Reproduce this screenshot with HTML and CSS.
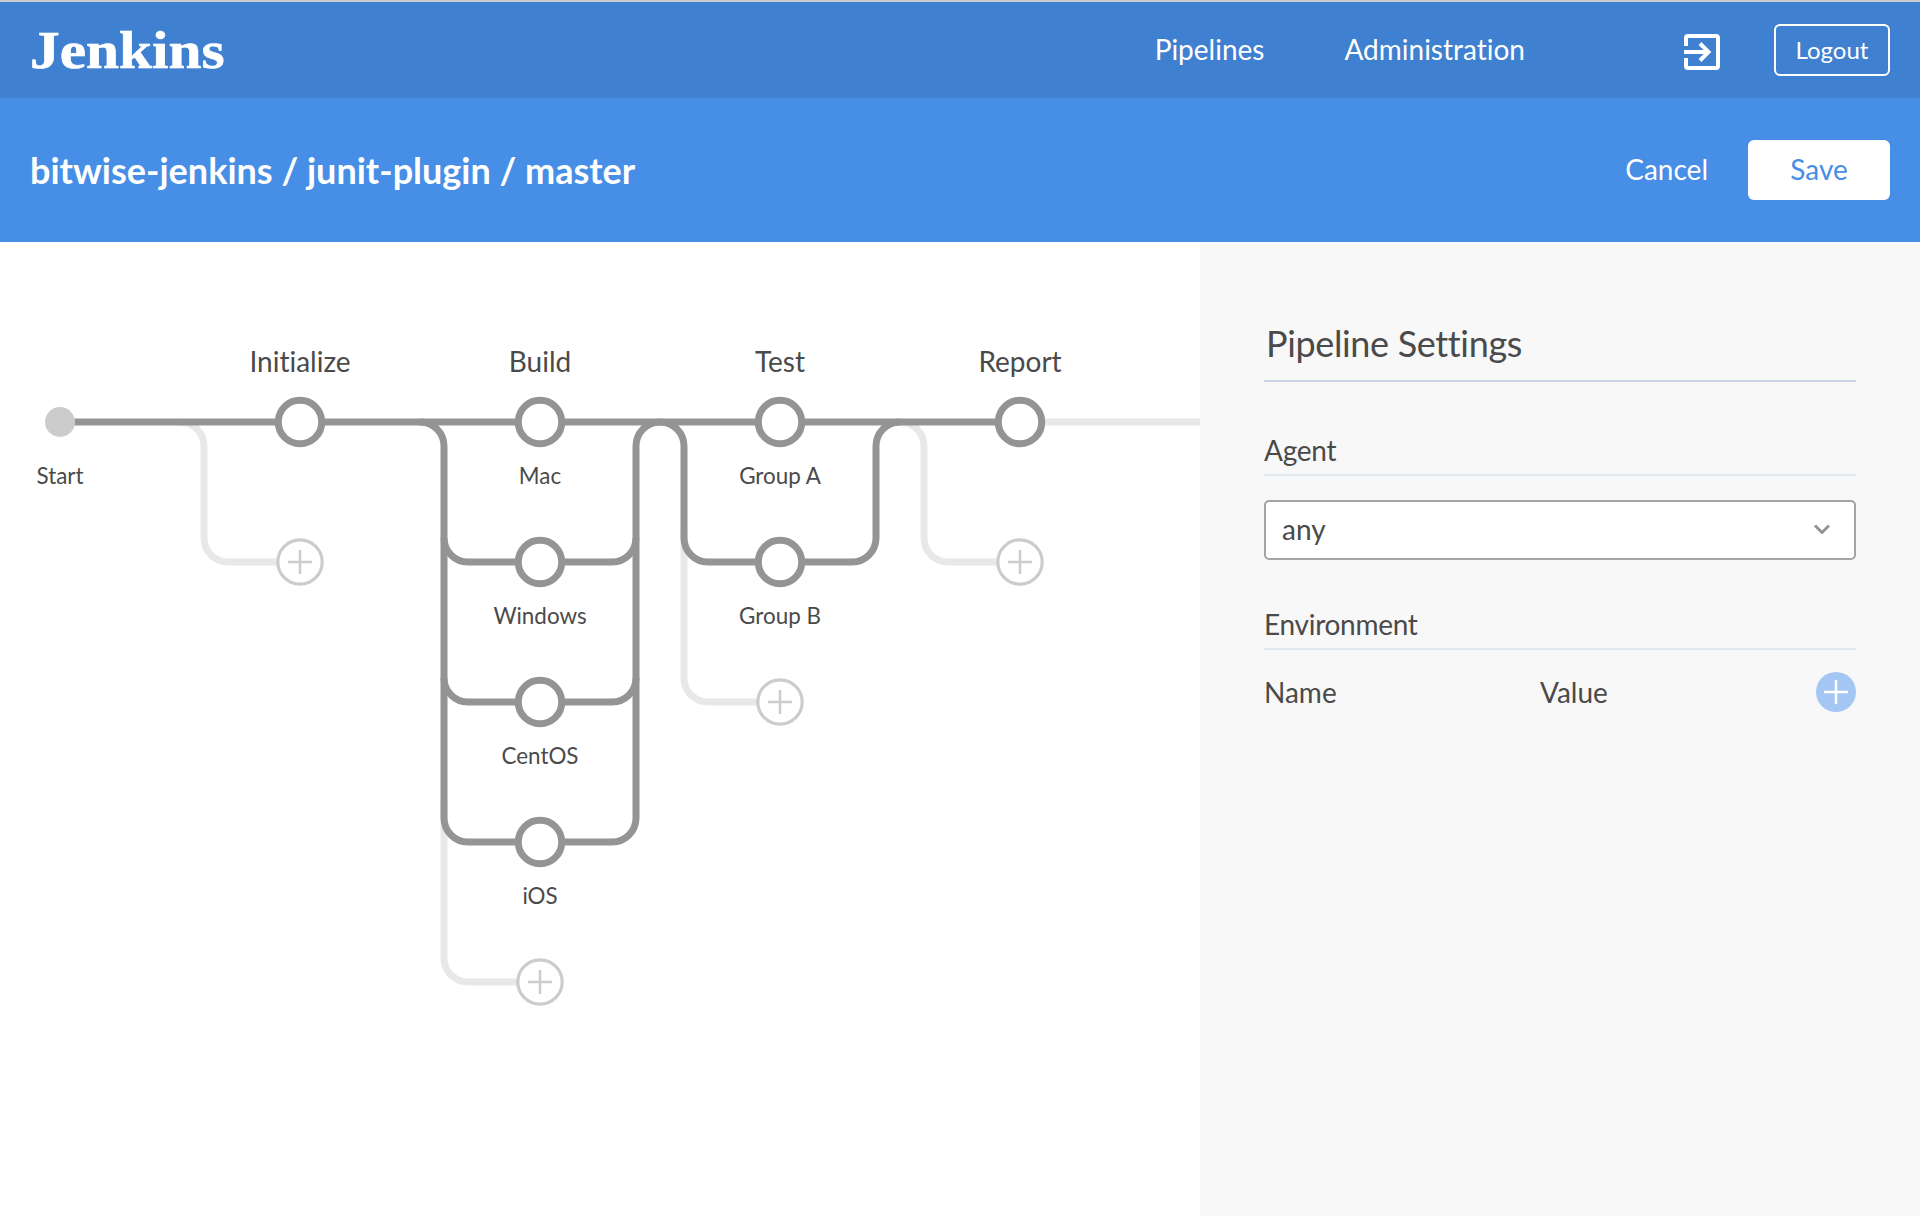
FILE: index.html
```html
<!DOCTYPE html>
<html lang="en">
<head>
<meta charset="utf-8">
<title>Jenkins Pipeline Editor</title>
<link rel="stylesheet" href="styles.css">
</head>
<body>
<header class="topbar">
  <div class="logo">Jenkins</div>
  <nav class="nav">
    <a class="nav-link">Pipelines</a>
    <a class="nav-link nav-admin">Administration</a>
    <svg class="exit-icon" viewBox="0 0 36 36"><path d="M2 12V4a2 2 0 0 1 2-2h28a2 2 0 0 1 2 2v28a2 2 0 0 1-2 2H4a2 2 0 0 1-2-2v-8" /><path d="M0 18h25M16 9.500l8.500 8.500l-8.500 8.500" /></svg>
    <button class="logout">Logout</button>
  </nav>
</header>
<section class="titlebar">
  <h1 class="title">bitwise-jenkins / junit-plugin / master</h1>
  <div class="actions">
    <a class="cancel">Cancel</a>
    <button class="save">Save</button>
  </div>
</section>
<main class="main">
  <section class="graph-pane">
    <svg class="graph" viewBox="0 242 1200 974">
      <g class="line-light">
        <path d="M180 422A24 24 0 0 1 204 446V538A24 24 0 0 0 228 562H300"/>
        <path d="M444 800V958A24 24 0 0 0 468 982H540"/>
        <path d="M684 530V678A24 24 0 0 0 708 702H780"/>
        <path d="M900 422A24 24 0 0 1 924 446V538A24 24 0 0 0 948 562H1020"/>
        <path d="M1020 422H1200"/>
      </g>
      <g class="line">
        <path d="M60 422H1020"/>
        <path d="M420 422A24 24 0 0 1 444 446V818A24 24 0 0 0 468 842H612A24 24 0 0 0 636 818V446A24 24 0 0 1 660 422"/>
        <path d="M444 538A24 24 0 0 0 468 562H612A24 24 0 0 0 636 538"/>
        <path d="M444 678A24 24 0 0 0 468 702H612A24 24 0 0 0 636 678"/>
        <path d="M660 422A24 24 0 0 1 684 446V538A24 24 0 0 0 708 562H852A24 24 0 0 0 876 538V446A24 24 0 0 1 900 422"/>
      </g>
      <circle class="start" cx="60" cy="422" r="15"/>
      <g class="node">
        <circle cx="300" cy="422" r="21.750"/>
        <circle cx="540" cy="422" r="21.750"/>
        <circle cx="540" cy="562" r="21.750"/>
        <circle cx="540" cy="702" r="21.750"/>
        <circle cx="540" cy="842" r="21.750"/>
        <circle cx="780" cy="422" r="21.750"/>
        <circle cx="780" cy="562" r="21.750"/>
        <circle cx="1020" cy="422" r="21.750"/>
      </g>
      <g class="add">
        <circle cx="300" cy="562" r="22.200"/><path d="M288 562h24M300 550v24"/>
        <circle cx="540" cy="982" r="22.200"/><path d="M528 982h24M540 970v24"/>
        <circle cx="780" cy="702" r="22.200"/><path d="M768 702h24M780 690v24"/>
        <circle cx="1020" cy="562" r="22.200"/><path d="M1008 562h24M1020 550v24"/>
      </g>
      <g class="stage">
        <text x="300" y="372">Initialize</text>
        <text x="540" y="372">Build</text>
        <text x="780" y="372">Test</text>
        <text x="1020" y="372">Report</text>
      </g>
      <g class="step">
        <text x="60" y="484">Start</text>
        <text x="540" y="484">Mac</text>
        <text x="540" y="624">Windows</text>
        <text x="540" y="764">CentOS</text>
        <text x="540" y="904">iOS</text>
        <text x="780" y="484">Group A</text>
        <text x="780" y="624">Group B</text>
      </g>
    </svg>
  </section>
  <aside class="settings">
    <h2 class="settings-title">Pipeline Settings</h2>
    <h3 class="group-title">Agent</h3>
    <div class="select">
      <span>any</span>
      <svg class="chevron" viewBox="0 0 16 10"><path d="M1 1.500l7 7l7-7"/></svg>
    </div>
    <h3 class="group-title env-title">Environment</h3>
    <div class="env-head">
      <span class="env-name">Name</span>
      <span class="env-value">Value</span>
      <svg class="env-add" viewBox="0 0 40 40"><circle cx="20" cy="20" r="20"/><path d="M8 20h24M20 8v24"/></svg>
    </div>
  </aside>
</main>
</body>
</html>
```
FILE: styles.css
```css
* { box-sizing: border-box; }
body {
  margin: 0;
  height: 1216px;
  display: flex;
  flex-direction: column;
  overflow: hidden;
  font-family: Lato, sans-serif;
  font-size: 28px;
  font-variant-ligatures: none;
  color: #4a4a4a;
  background: #fff;
}
h1, h2, h3 { margin: 0; font-weight: 400; }
button { font-family: inherit; padding: 0; }

.topbar {
  height: 98px;
  flex: none;
  border-top: 2px solid #ccc;
  background: #4080d0;
  color: #fff;
  display: flex;
  justify-content: space-between;
  padding: 0 30px;
}
.logo {
  font-family: "Liberation Serif", serif;
  font-weight: 700;
  font-size: 53px;
  line-height: 96px;
  transform: scaleX(1.12);
  transform-origin: left;
  -webkit-text-stroke: 0.6px #fff;
}
.nav { display: flex; align-items: center; }
.nav-link { line-height: 94px; padding-bottom: 2px; }
.nav-admin { margin-left: 80px; }
.exit-icon {
  width: 36px;
  height: 36px;
  margin: 4px 54px 0 159px;
  fill: none;
  stroke: #fff;
  stroke-width: 4;
}
.logout {
  width: 116px;
  height: 52px;
  padding-bottom: 2px;
  border: 2px solid #fff;
  border-radius: 6px;
  background: transparent;
  color: #fff;
  font-size: 24px;
}

.titlebar {
  height: 144px;
  flex: none;
  background: #478ee6;
  color: #fff;
  display: flex;
  align-items: center;
  justify-content: space-between;
  padding: 0 30px;
}
.title { font-size: 36px; font-weight: 700; }
.actions { display: flex; align-items: center; gap: 40px; }
.cancel { padding-bottom: 2px; }
.save {
  width: 142px;
  height: 60px;
  padding-bottom: 2px;
  border: 0;
  border-radius: 6px;
  background: #fff;
  color: #478ee6;
  font-size: 28px;
}

.main { flex: 1; display: flex; }
.graph-pane { width: 1200px; }
.graph { display: block; width: 1200px; height: 974px; }
.line, .line-light { fill: none; stroke: #949494; stroke-width: 7; }
.line-light { stroke: #e8e8e8; }
.start { fill: #ccc; }
.node { fill: #fff; stroke: #949494; stroke-width: 7; }
.add { fill: #fff; stroke: #ccc; stroke-width: 3.2; }
.add path { stroke-width: 2.5; }
.stage, .step { fill: #4a4a4a; text-anchor: middle; }
.stage { font-size: 28px; }
.step { font-size: 22.4px; }

.settings {
  flex: 1;
  background: #f8f8f8;
  padding: 78px 64px 0;
}
.settings-title {
  height: 62px;
  padding-left: 2px;
  border-bottom: 2px solid #ccd6e4;
  font-size: 36px;
  letter-spacing: -0.35px;
  line-height: 46px;
}
.group-title {
  height: 48px;
  margin-top: 46px;
  border-bottom: 2px solid #e2e8ef;
  font-size: 28px;
  letter-spacing: -0.28px;
  line-height: 44px;
}
.select {
  height: 60px;
  margin-top: 24px;
  padding: 0 24px 2px 16px;
  border: 2px solid #a4a4a4;
  border-radius: 5px;
  background: #fff;
  display: flex;
  align-items: center;
  justify-content: space-between;
}
.chevron { width: 16px; height: 10px; fill: none; stroke: #949494; stroke-width: 3; }
.env-title { margin-top: 42px; }
.env-head { display: flex; align-items: center; margin-top: 22px; }
.env-name { width: 276px; padding-bottom: 1px; }
.env-value { flex: 1; padding-bottom: 1px; }
.env-add { width: 40px; height: 40px; fill: #a3c6f3; stroke: none; }
.env-add path { stroke: #fff; stroke-width: 2.5; }
```
